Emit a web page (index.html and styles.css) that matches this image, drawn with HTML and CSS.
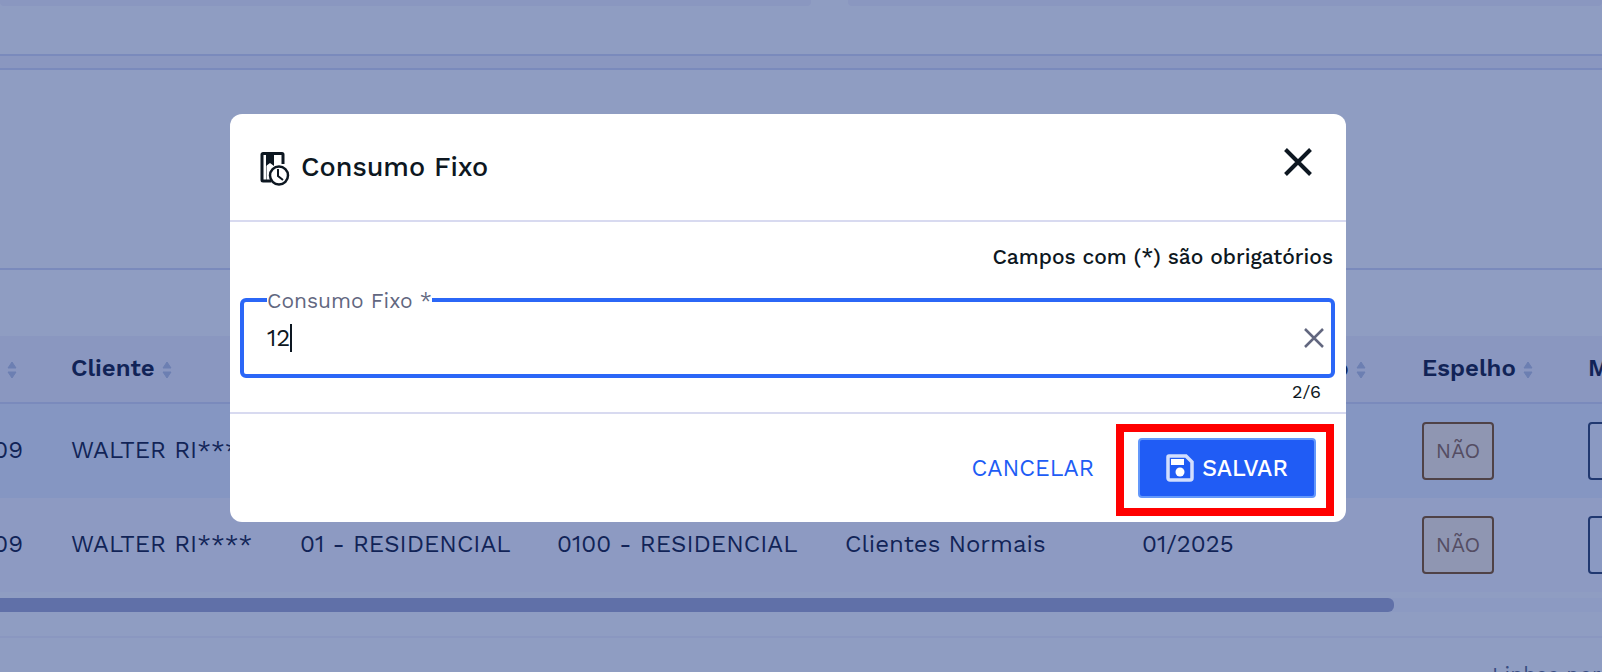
FILE: index.html
```html
<!DOCTYPE html>
<html lang="pt-BR">
<head>
  <meta charset="UTF-8">
  <meta name="viewport" content="width=device-width, initial-scale=1.0">
  <title>Consumo Fixo</title>
  <link rel="stylesheet" href="styles.css">
</head>
<body>
  <svg class="sprite" aria-hidden="true">
    <symbol id="sort" viewBox="0 0 10 18">
      <path d="M5 1L9 7H1zM5 17L1 11h8z" stroke="#b8c2de" stroke-linejoin="round"/>
    </symbol>
  </svg>

  <main class="page">
    <section class="filters">
      <div class="filter-card"></div>
      <div class="filter-card"></div>
    </section>
    <div class="divider"></div>
    <section class="toolbar"></section>

    <section class="table-wrapper">
      <table class="table">
        <colgroup>
          <col class="col-id">
          <col class="col-cliente">
          <col class="col-categoria">
          <col class="col-subcategoria">
          <col class="col-grupo">
          <col class="col-referencia">
          <col class="col-espelho">
          <col>
        </colgroup>
        <thead>
          <tr>
            <th class="cell-id"><svg class="sort"><use href="#sort"/></svg></th>
            <th>Cliente <svg class="sort"><use href="#sort"/></svg></th>
            <th></th>
            <th></th>
            <th></th>
            <th class="cell-end">o <svg class="sort"><use href="#sort"/></svg></th>
            <th>Espelho <svg class="sort"><use href="#sort"/></svg></th>
            <th>M</th>
          </tr>
        </thead>
        <tbody>
          <tr class="selected">
            <td class="cell-id">09</td>
            <td>WALTER RI****</td>
            <td></td>
            <td></td>
            <td></td>
            <td></td>
            <td class="cell-tag"><span class="tag">NÃO</span></td>
            <td class="cell-tag"><span class="tag tag-blue"></span></td>
          </tr>
          <tr>
            <td class="cell-id">09</td>
            <td>WALTER RI****</td>
            <td>01 - RESIDENCIAL</td>
            <td>0100 - RESIDENCIAL</td>
            <td>Clientes Normais</td>
            <td>01/2025</td>
            <td class="cell-tag"><span class="tag">NÃO</span></td>
            <td class="cell-tag"><span class="tag tag-blue"></span></td>
          </tr>
        </tbody>
      </table>
      <div class="scrollbar"><div class="scrollbar-thumb"></div></div>
    </section>
    <footer class="pagination">Linhas por</footer>
  </main>

  <div class="backdrop">
    <form class="modal" role="dialog" aria-labelledby="modal-title">
      <header class="modal-header">
        <svg class="title-icon" viewBox="0 0 30 34">
          <path d="M23 12V2.500a1 1 0 0 0-1-1H3a1 1 0 0 0-1 1V28a1 1 0 0 0 1 1h8" fill="none" stroke="currentColor" stroke-width="3"/>
          <path d="M6.500 2v27" stroke="currentColor" stroke-opacity=".5"/>
          <path d="M6 2h8v12l-4-3-4 3z" fill="currentColor"/>
          <circle cx="19" cy="23.500" r="9" fill="#fff" stroke="currentColor" stroke-width="2.500"/>
          <path d="M18 17v7l5 4" fill="none" stroke="currentColor" stroke-width="2"/>
        </svg>
        <h2 class="modal-title" id="modal-title">Consumo Fixo</h2>
        <button class="icon-button close" type="button" aria-label="Fechar">
          <svg viewBox="0 0 28 28"><path d="M1.500 1.500l25 25M26.500 1.500l-25 25" stroke="currentColor" stroke-width="4"/></svg>
        </button>
      </header>

      <div class="modal-body">
        <p class="required-note">Campos com (*) são obrigatórios</p>
        <div class="field">
          <label class="field-label" for="consumo">Consumo Fixo *</label>
          <input class="field-input" id="consumo" type="text" value="12" maxlength="6">
          <span class="caret"></span>
          <button class="icon-button clear" type="button" aria-label="Limpar">
            <svg viewBox="0 0 20 20"><path d="M1 1l18 18M19 1L1 19" stroke="currentColor" stroke-width="2.500"/></svg>
          </button>
        </div>
        <p class="counter">2/6</p>
      </div>

      <footer class="modal-footer">
        <button class="button button-text" type="button">CANCELAR</button>
        <div class="save">
          <button class="button button-primary" type="button">
            <svg class="save-icon" viewBox="0 0 28 28">
              <path d="M3 2h17l6 6v16a2 2 0 0 1-2 2H4a2 2 0 0 1-2-2V3a1 1 0 0 1 1-1z" fill="none" stroke="currentColor" stroke-width="3.500"/>
              <rect x="5" y="5" width="13" height="6" fill="#fff"/>
              <circle cx="14" cy="18" r="4.500" fill="#fff"/>
            </svg>
            SALVAR
          </button>
          <span class="highlight"></span>
        </div>
      </footer>
    </form>
  </div>
</body>
</html>
```
FILE: styles.css
```css
* {
  box-sizing: border-box;
}
body {
  margin: 0;
  overflow: hidden;
  background-color: #fff;
  font-family: 'Work Sans', 'Inter', sans-serif;
  font-size: 24px;
  color: #040a28;
}
button,
input {
  font: inherit;
  color: inherit;
}
.sprite {
  display: none;
}

/* Page */
.page {
  height: 100vh;
  overflow: hidden;
}
.filters {
  display: flex;
  gap: 37px;
  padding-bottom: 48px;
}
.filter-card {
  flex: 1;
  height: 6px;
  border-radius: 0 0 4px 4px;
  background-color: #f4f2fa;
}
.filter-card:first-child {
  flex: 0 0 811px;
}
.divider {
  height: 16px;
  border-top: 2px solid #d4d8f2;
  border-bottom: 2px solid #d4d8f2;
  background-color: #f4f2fa;
}
.toolbar {
  height: 200px;
  border-bottom: 2px solid #d4d8f2;
}
.table-wrapper {
  overflow: hidden;
  padding-top: 66px;
}
.table {
  width: calc(100% + 120px);
  margin-left: -60px;
  table-layout: fixed;
  border-collapse: separate;
  border-spacing: 0;
}
.col-id {
  width: 107px;
}
.col-cliente {
  width: 229px;
}
.col-categoria {
  width: 257px;
}
.col-subcategoria {
  width: 288px;
}
.col-grupo {
  width: 297px;
}
.col-referencia {
  width: 280px;
}
.col-espelho {
  width: 166px;
}
.table th,
.table td {
  padding: 0 0 2px 24px;
  text-align: left;
  white-space: nowrap;
}
.table th {
  height: 68px;
  border-bottom: 2px solid #d4d8f2;
  background-color: #f4f2fa;
  font-weight: 600;
}
.table td {
  height: 94px;
  background-color: #faf8ff;
}
.table .selected td {
  background-color: #eaf0fe;
}
.table .cell-id {
  padding-right: 24px;
  text-align: right;
}
.table th.cell-id {
  padding-right: 30px;
}
.table .cell-tag {
  padding-bottom: 0;
}
.table .cell-end {
  padding-right: 32px;
  text-align: right;
}
.sort {
  width: 10px;
  height: 18px;
  vertical-align: -3px;
  fill: #b8c2de;
}
.tag {
  display: inline-flex;
  align-items: center;
  justify-content: center;
  width: 72px;
  height: 58px;
  padding-bottom: 2px;
  border: 2px solid #7e4808;
  border-radius: 4px;
  background-color: #fff0de;
  color: #8a5f40;
  font-size: 21px;
  vertical-align: middle;
}
.tag-blue {
  border-color: #20345a;
  background-color: #f4f6ff;
}
.scrollbar {
  margin-top: 6px;
  background-color: #f8f8ff;
}
.scrollbar-thumb {
  width: 87%;
  height: 14px;
  border-radius: 0 6px 6px 0;
  background-color: #a0a4ca;
}
.pagination {
  margin-top: 24px;
  padding: 24px 0 0 1492px;
  border-top: 2px solid #f4f2fa;
  color: #505a78;
  font-size: 21px;
  white-space: nowrap;
}

/* Modal */
.backdrop {
  position: fixed;
  inset: 0;
  display: flex;
  align-items: flex-start;
  justify-content: center;
  padding: 114px 26px 0 0;
  background-color: rgba(32, 60, 134, 0.5);
}
.modal {
  width: 1116px;
  max-width: 100%;
  border-radius: 12px;
  background-color: #fff;
  color: #0d1721;
}
.modal-header {
  display: flex;
  align-items: center;
  height: 108px;
  padding: 0 34px 0 30px;
  border-bottom: 2px solid #d8daf0;
}
.title-icon {
  width: 30px;
  height: 34px;
  margin-top: 4px;
}
.modal-title {
  flex: 1;
  margin: 0 0 0 11px;
  font-size: 27px;
  font-weight: 500;
}
.icon-button {
  display: flex;
  padding: 0;
  border: 0;
  background: none;
  cursor: pointer;
}
.close {
  align-self: flex-start;
  margin-top: 34px;
}
.close svg {
  width: 28px;
  height: 28px;
}
.modal-body {
  padding: 22px 11px 8px 10px;
}
.required-note {
  margin: 0 2px 28px 0;
  font-size: 21px;
  font-weight: 500;
  line-height: 26px;
  text-align: right;
}
.field {
  position: relative;
  display: flex;
  align-items: center;
  height: 80px;
  padding-right: 7px;
  border: 4px solid #2b67f7;
  border-radius: 6px;
}
.field-label {
  position: absolute;
  top: -14px;
  left: 23px;
  background-color: #fff;
  color: #62677f;
  font-size: 21px;
  line-height: 26px;
}
.field-input {
  flex: 1;
  min-width: 0;
  padding: 0 23px;
  border: 0;
  outline: none;
  background: none;
}
.caret {
  position: absolute;
  top: 22px;
  left: 46px;
  width: 2px;
  height: 28px;
  background-color: #0d1721;
}
.clear {
  color: #62677f;
}
.clear svg {
  width: 20px;
  height: 20px;
}
.counter {
  margin: 2px 14px 0 0;
  font-size: 18px;
  line-height: 24px;
  text-align: right;
}
.modal-footer {
  display: flex;
  align-items: center;
  justify-content: flex-end;
  gap: 44px;
  height: 110px;
  padding-right: 30px;
  border-top: 2px solid #d8daf0;
}
.button {
  display: flex;
  align-items: center;
  justify-content: center;
  gap: 8px;
  padding: 0;
  border: 0;
  background: none;
  font-size: 23px;
  cursor: pointer;
}
.button-text {
  color: #205cf5;
}
.save {
  position: relative;
}
.button-primary {
  width: 178px;
  height: 60px;
  border: 2px solid #6398fb;
  border-radius: 4px;
  background-color: #205cf5;
  color: #fff;
  font-weight: 500;
}
.save-icon {
  width: 28px;
  height: 28px;
  color: #d2defd;
}
.highlight {
  position: absolute;
  inset: -14px -18px -18px -22px;
  border: 8px solid #f00;
  pointer-events: none;
}
```
